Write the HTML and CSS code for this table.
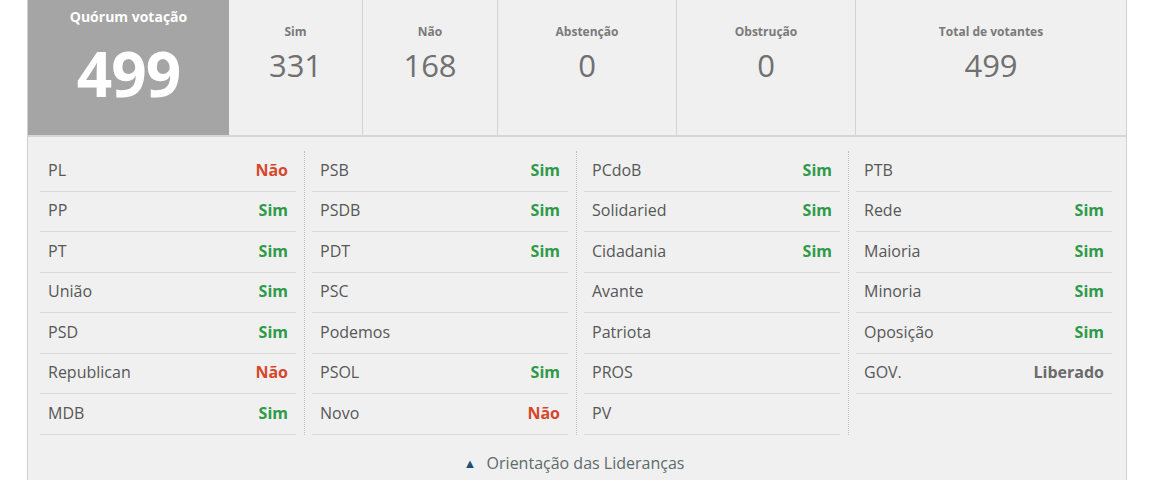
FILE: index.html
```html
<!DOCTYPE html>
<html lang="pt">
<head>
<meta charset="utf-8">
<link rel="stylesheet" href="styles.css">
</head>
<body>
<div class="panel">
  <div class="summary">
    <div class="quorum">
      <div class="quorum-title">Quórum votação</div>
      <div class="quorum-num">499</div>
    </div>
    <div class="stat"><div class="stat-label">Sim</div><div class="stat-num">331</div></div>
    <div class="stat"><div class="stat-label">Não</div><div class="stat-num">168</div></div>
    <div class="stat"><div class="stat-label">Abstenção</div><div class="stat-num">0</div></div>
    <div class="stat"><div class="stat-label">Obstrução</div><div class="stat-num">0</div></div>
    <div class="stat"><div class="stat-label">Total de votantes</div><div class="stat-num">499</div></div>
  </div>
  <div class="cols">
    <div class="col">
      <div class="row"><span class="party">PL</span><span class="vote nao">Não</span></div>
      <div class="row"><span class="party">PP</span><span class="vote sim">Sim</span></div>
      <div class="row"><span class="party">PT</span><span class="vote sim">Sim</span></div>
      <div class="row"><span class="party">União</span><span class="vote sim">Sim</span></div>
      <div class="row"><span class="party">PSD</span><span class="vote sim">Sim</span></div>
      <div class="row"><span class="party">Republican</span><span class="vote nao">Não</span></div>
      <div class="row"><span class="party">MDB</span><span class="vote sim">Sim</span></div>
    </div>
    <div class="col">
      <div class="row"><span class="party">PSB</span><span class="vote sim">Sim</span></div>
      <div class="row"><span class="party">PSDB</span><span class="vote sim">Sim</span></div>
      <div class="row"><span class="party">PDT</span><span class="vote sim">Sim</span></div>
      <div class="row"><span class="party">PSC</span><span class="vote"></span></div>
      <div class="row"><span class="party">Podemos</span><span class="vote"></span></div>
      <div class="row"><span class="party">PSOL</span><span class="vote sim">Sim</span></div>
      <div class="row"><span class="party">Novo</span><span class="vote nao">Não</span></div>
    </div>
    <div class="col">
      <div class="row"><span class="party">PCdoB</span><span class="vote sim">Sim</span></div>
      <div class="row"><span class="party">Solidaried</span><span class="vote sim">Sim</span></div>
      <div class="row"><span class="party">Cidadania</span><span class="vote sim">Sim</span></div>
      <div class="row"><span class="party">Avante</span><span class="vote"></span></div>
      <div class="row"><span class="party">Patriota</span><span class="vote"></span></div>
      <div class="row"><span class="party">PROS</span><span class="vote"></span></div>
      <div class="row"><span class="party">PV</span><span class="vote"></span></div>
    </div>
    <div class="col">
      <div class="row"><span class="party">PTB</span><span class="vote"></span></div>
      <div class="row"><span class="party">Rede</span><span class="vote sim">Sim</span></div>
      <div class="row"><span class="party">Maioria</span><span class="vote sim">Sim</span></div>
      <div class="row"><span class="party">Minoria</span><span class="vote sim">Sim</span></div>
      <div class="row"><span class="party">Oposição</span><span class="vote sim">Sim</span></div>
      <div class="row"><span class="party">GOV.</span><span class="vote lib">Liberado</span></div>
    </div>
  </div>
  <div class="footer"><span class="tri">▲</span> Orientação das Lideranças</div>
</div>
</body>
</html>
```

FILE: styles.css
```css
html, body {
  margin: 0;
  padding: 0;
  background: #ffffff;
  font-family: "Open Sans", "Liberation Sans", sans-serif;
}

.panel {
  margin-left: 27px;
  width: 1098px;
  min-height: 480px;
  background: #f0f0f0;
  border-left: 1px solid #cfcfcf;
  border-right: 1px solid #cfcfcf;
}

.summary {
  display: grid;
  grid-template-columns: 201px 134px 135px 179px 179px 1fr;
  height: 135px;
  border-bottom: 2px solid #d6d6d6;
}

.quorum {
  background: #a5a5a5;
  color: #ffffff;
  text-align: center;
}

.quorum-title {
  font-weight: 700;
  font-size: 14px;
  line-height: 18px;
  padding-top: 8px;
}

.quorum-num {
  font-weight: 700;
  font-size: 62px;
  line-height: 70px;
  margin-top: 12px;
  letter-spacing: -1px;
}

.stat {
  text-align: center;
  border-right: 1px solid #d3d3d3;
  color: #747474;
}

.stat:last-child {
  border-right: none;
}

.stat-label {
  font-weight: 700;
  font-size: 12px;
  line-height: 14px;
  padding-top: 25px;
  color: #7a7a7a;
}

.stat-num {
  font-size: 31px;
  line-height: 40px;
  margin-top: 6px;
  color: #707070;
}

.cols {
  display: flex;
  padding: 14px 0 0 12px;
}

.col {
  width: 256px;
  padding-right: 8px;
}

.col + .col {
  border-left: 1px dotted #bdbdbd;
  padding-left: 7px;
}

.row {
  display: flex;
  justify-content: space-between;
  align-items: center;
  height: 39.5px;
  border-bottom: 1px solid #d9d9d9;
  padding: 0 8px;
}

.party {
  font-size: 16px;
  line-height: 20px;
  color: #575757;
  margin-top: -2px;
}

.vote {
  font-size: 16px;
  line-height: 20px;
  font-weight: 700;
  margin-top: -2px;
}

.sim { color: #2f9a48; }
.nao { color: #d6472b; }
.lib { color: #6a6a6a; }

.footer {
  text-align: center;
  padding-top: 17px;
  font-size: 16px;
  color: #5c6b6b;
  padding-right: 6px;
}

.tri {
  color: #1d4f73;
  font-size: 13px;
  margin-right: 6px;
  vertical-align: 1px;
}
```
